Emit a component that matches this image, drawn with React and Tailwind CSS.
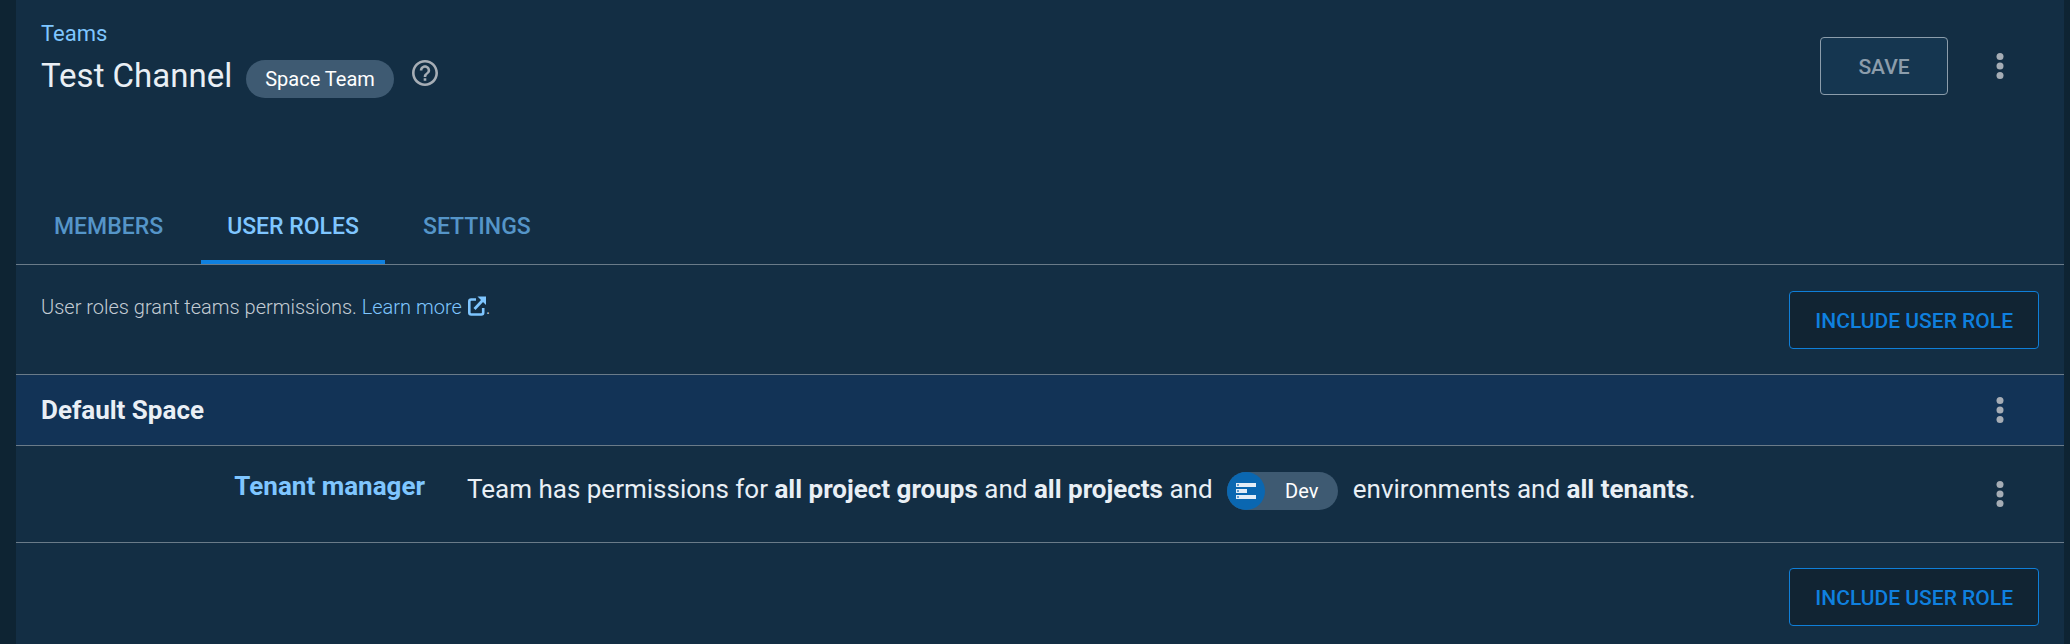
import React from "react";

const tabs = ["Members", "User Roles", "Settings"];

function MenuButton({ label }) {
  return (
    <button type="button" aria-label={label} className="flex size-12 shrink-0 items-center justify-center text-[#a6adb5]">
      <svg viewBox="0 0 32 32" className="size-8" fill="currentColor" aria-hidden="true">
        <circle cx="16" cy="6.5" r="3.5" />
        <circle cx="16" cy="16" r="3.5" />
        <circle cx="16" cy="25.5" r="3.5" />
      </svg>
    </button>
  );
}

function HelpIcon() {
  return (
    <svg viewBox="2 2 20 20" className="size-[26px]" fill="currentColor" aria-hidden="true">
      <path d="M11 18h2v-2h-2v2zm1-16C6.48 2 2 6.48 2 12s4.48 10 10 10 10-4.48 10-10S17.52 2 12 2zm0 18c-4.41 0-8-3.59-8-8s3.59-8 8-8 8 3.59 8 8-3.59 8-8 8zm0-14c-2.21 0-4 1.79-4 4h2c0-1.1.9-2 2-2s2 .9 2 2c0 2-3 1.75-3 5h2c0-2.25 3-2.5 3-5 0-2.21-1.79-4-4-4z" />
    </svg>
  );
}

function ExternalLinkIcon() {
  return (
    <svg viewBox="0 0 18 20" className="ml-1.5 inline-block h-5 w-[18px] align-[-2px]" fill="none" aria-hidden="true">
      <path d="M8 3.5H3.2Q1.3 3.5 1.3 5.4V16.6Q1.3 18.5 3.2 18.5H13.3Q15.2 18.5 15.2 16.6V12" stroke="currentColor" strokeWidth="2.6" />
      <path d="M6.5 13L14.5 4.5" stroke="currentColor" strokeWidth="2.8" />
      <path d="M9.5 0.5H18V9Z" fill="currentColor" />
    </svg>
  );
}

function EnvironmentChip({ name }) {
  return (
    <span className="mx-2 inline-flex h-[38px] items-center rounded-full bg-[#3e5a72] pr-5 align-middle text-xl text-white">
      <span className="mr-5 flex size-[38px] items-center justify-center rounded-full bg-[#0a67b1]">
        <svg viewBox="0 0 20 16" className="h-4 w-5" aria-hidden="true">
          <path fill="#e3edf7" d="M0 0h20v4H0zM0 6h11v4H0zM0 12h20v4H0z" />
          <path fill="#0a67b1" d="M1.2 1.2h1.6v1.6H1.2zM1.2 7.2h1.6v1.6H1.2zM1.2 13.2h1.6v1.6H1.2z" />
        </svg>
      </span>
      {name}
    </span>
  );
}

function IncludeRoleButton() {
  return (
    <button type="button" className="h-[58px] rounded border border-[#0f7fd9] bg-[#112433] px-[25px] pt-1 text-[21px] font-medium uppercase text-[#0f80df]">
      Include user role
    </button>
  );
}

export default function App() {
  return (
    <div className="min-h-screen bg-[#0e2433] pr-1.5 pl-4 font-['Roboto',sans-serif] text-[#e9eff5]">
      <main className="min-h-screen bg-[#132e44]">
        <header className="flex items-start justify-between pt-5 pr-10 pl-[25px]">
          <div>
            <a href="#teams" className="block text-[22px] leading-7 text-[#7fc6ff]">
              Teams
            </a>
            <div className="mt-2 flex items-start">
              <h1 className="text-[33px] leading-10">Test Channel</h1>
              <span className="mt-1 ml-3.5 flex h-[38px] items-center rounded-full bg-[#3e5a72] px-[19px] text-xl text-white">
                Space Team
              </span>
              <button type="button" aria-label="Help" className="mt-1 ml-[18px] text-[#a6adb5]">
                <HelpIcon />
              </button>
            </div>
          </div>
          <div className="flex items-center gap-7 pt-[17px]">
            <button type="button" className="h-[58px] w-32 rounded border border-[#8c9dab] bg-[#153650] pt-1 text-[21px] font-medium uppercase text-[#8c9dab]">
              Save
            </button>
            <MenuButton label="Team actions" />
          </div>
        </header>

        <nav className="mt-[89px] flex gap-3 border-b border-[#6a7b89] px-3">
          {tabs.map((tab) => (
            <a
              key={tab}
              href="#tab"
              className={
                tab === "User Roles"
                  ? "flex h-[77px] items-center border-b-4 border-[#0f80df] px-[26px] pt-2 text-[23px] font-medium uppercase text-[#7fc6ff]"
                  : "flex h-[77px] items-center border-b-4 border-transparent px-[26px] pt-2 text-[23px] font-medium uppercase text-[#5595c8]"
              }
            >
              {tab}
            </a>
          ))}
        </nav>

        <section>
          <div className="flex h-[109px] items-start justify-between px-[25px] pt-[26px]">
            <p className="text-xl leading-8 font-light text-[#c3ccd4]">
              User roles grant teams permissions.{" "}
              <a href="#learn" className="text-[#7fc6ff]">
                Learn more
                <ExternalLinkIcon />
              </a>
              .
            </p>
            <IncludeRoleButton />
          </div>

          <div className="flex h-[72px] items-center justify-between border-y border-[#6a7b89] bg-[#123356] pr-10 pl-[25px]">
            <h2 className="text-[26px] font-bold">Default Space</h2>
            <MenuButton label="Default Space actions" />
          </div>

          <div className="flex h-[97px] items-center border-b border-[#6a7b89] pr-10 pl-[25px] text-[26px]">
            <a href="#role" className="w-96 pb-4 text-right font-bold text-[#7fc6ff]">
              Tenant manager
            </a>
            <p className="flex-1 pb-2 pl-[42px]">
              Team has permissions for <b>all project groups</b> and <b>all projects</b> and{" "}
              <EnvironmentChip name="Dev" /> environments and <b>all tenants</b>.
            </p>
            <MenuButton label="Tenant manager actions" />
          </div>

          <div className="flex justify-end px-[25px] pt-[25px]">
            <IncludeRoleButton />
          </div>
        </section>
      </main>
    </div>
  );
}
